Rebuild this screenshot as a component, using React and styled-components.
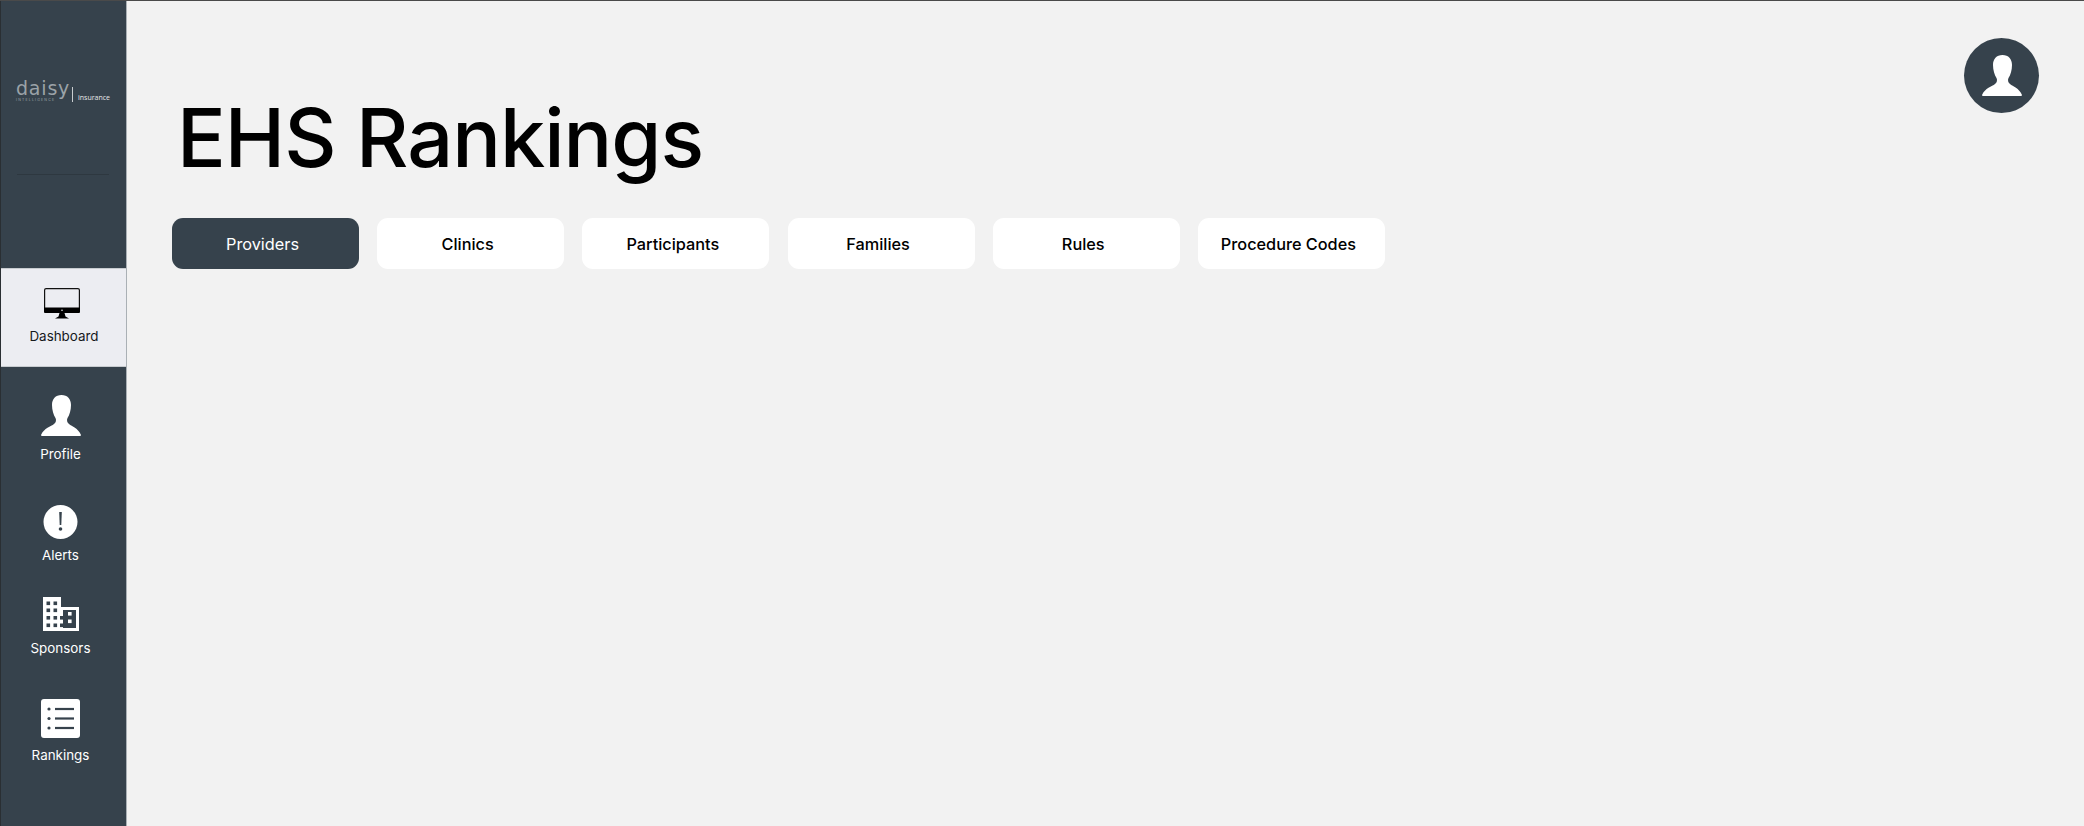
import React from 'react';
import styled, { createGlobalStyle } from 'styled-components';

const GlobalStyle = createGlobalStyle`
  * {
    box-sizing: border-box;
  }
  html, body {
    margin: 0;
    padding: 0;
    height: 100%;
    overflow: hidden;
    background: #f2f2f2;
    font-family: Inter, "Liberation Sans", sans-serif;
  }
`;

const Page = styled.div`
  display: flex;
  width: 2084px;
  height: 826px;
  border-top: 1px solid #4a4a4a;
`;

const Sidebar = styled.aside`
  display: flex;
  flex-direction: column;
  flex: 0 0 127px;
  background-color: #36424c;
  border-left: 1px solid #2a2f33;
  border-right: 1px solid #aab0b5;
`;

const Brand = styled.div`
  height: 267px;
  padding: 79px 0 0 15px;
`;

const Logo = styled.div`
  display: flex;
  align-items: flex-end;
  height: 22px;
`;

const LogoMark = styled.div`
  display: flex;
  flex-direction: column;
  width: 53px;
  color: #9ba3a8;
`;

const LogoName = styled.span`
  font-family: "DejaVu Sans", sans-serif;
  font-size: 19px;
  line-height: 19px;
  letter-spacing: 0.8px;
`;

const LogoTag = styled.span`
  font-size: 3.5px;
  line-height: 4px;
  letter-spacing: 1.2px;
  white-space: nowrap;
`;

const LogoBar = styled.div`
  width: 1px;
  height: 15px;
  margin: 0 5px 0 3px;
  background-color: #c9cdd0;
`;

const LogoProduct = styled.span`
  font-family: "Open Sans", sans-serif;
  font-size: 7px;
  font-weight: 500;
  line-height: 9px;
  color: #e6e8ea;
`;

const BrandRule = styled.hr`
  width: 92px;
  height: 1px;
  margin: 72px 0 0 1px;
  border: 0;
  background-color: #2e3840;
`;

const NavItem = styled.div`
  display: flex;
  flex-direction: column;
  align-items: center;
  height: ${(p) => (p.$active ? '99px' : 'auto')};
  padding: ${(p) => (p.$active ? '19px 0 0 1px' : '0 6px 0 0')};
  margin-top: ${(p) => p.$top || 0}px;
  background-color: ${(p) => (p.$active ? '#ecedf2' : 'transparent')};
  color: ${(p) => (p.$active ? '#15191c' : '#ffffff')};
  border-top: ${(p) => (p.$active ? '1px solid #c8ccd0' : '0')};
  border-bottom: ${(p) => (p.$active ? '1px solid #c8ccd0' : '0')};
`;

const NavIcon = styled.svg`
  display: block;
  flex: none;
  margin-right: ${(p) => p.$shift || 0}px;
`;

const NavLabel = styled.span`
  margin-top: ${(p) => p.$gap || 8}px;
  font-size: 13.4px;
  line-height: 18px;
  white-space: nowrap;
`;

const Main = styled.main`
  flex: 1;
  padding: 37px 45px 0 45px;
`;

const Header = styled.header`
  display: flex;
  justify-content: space-between;
  align-items: flex-start;
`;

const Title = styled.h1`
  margin: 51px 0 0 5px;
  font-size: 81px;
  font-weight: 500;
  line-height: 98px;
  letter-spacing: -1px;
  color: #000000;
`;

const Avatar = styled.div`
  display: flex;
  align-items: center;
  justify-content: center;
  width: 75px;
  height: 75px;
  border-radius: 50%;
  background-color: #36424c;
`;

const Tabs = styled.nav`
  display: flex;
  gap: 18.2px;
  margin-top: 31px;
`;

const Tab = styled.button`
  width: 187px;
  height: 51px;
  padding: 0 6px 0 0;
  border: 0;
  border-radius: 11px;
  background-color: ${(p) => (p.$active ? '#36424c' : '#ffffff')};
  color: ${(p) => (p.$active ? '#ffffff' : '#000000')};
  font-family: inherit;
  font-size: 16.3px;
  font-weight: ${(p) => (p.$active ? 400 : 450)};
  white-space: nowrap;
`;

const PERSON = 'M20.5 0C26.5 0 30 4 30 10C30 15 28.5 20 26.5 23C25.5 25 26 27.5 28 29C31 31.5 37 33 40 40Q40 41 39 41L1 41Q0 41 0 40C3 33 10 31.5 13 29C15 27.5 15.5 25 14.5 23C12.5 20 11 15 11 10C11 4 14.5 0 20.5 0Z';

function PersonIcon() {
  return (
    <NavIcon width="40" height="41" viewBox="0 0 40 41" fill="#fff">
      <path d={PERSON} />
    </NavIcon>
  );
}

function MonitorIcon() {
  return (
    <NavIcon $shift={5} width="36" height="31" viewBox="0 0 36 31">
      <rect x="0.6" y="0.6" width="34.8" height="23" rx="1.5" fill="#ecedf2" stroke="#111" strokeWidth="1.2" />
      <path d="M0 19.5H36V24Q36 25 35 25H1Q0 25 0 24Z" fill="#000" />
      <circle cx="18" cy="22.2" r="0.8" fill="#ecedf2" />
      <path d="M15.5 25H20.5L21.5 28.5L25 30.5H11L14.5 28.5Z" fill="#000" />
    </NavIcon>
  );
}

function AlertIcon() {
  return (
    <NavIcon width="35" height="34" viewBox="0 0 35 34">
      <circle cx="17.5" cy="17" r="17" fill="#fff" />
      <path d="M16.2 7H18.8L18.3 20H16.7Z" fill="#36424c" />
      <circle cx="17.5" cy="24" r="1.8" fill="#36424c" />
    </NavIcon>
  );
}

function BuildingIcon() {
  const dark = [
    [3.5, 4.5], [10.5, 4.5],
    [3.5, 11.5], [10.5, 11.5],
    [3.5, 19], [10.5, 19], [17, 19],
    [3.5, 26.5], [10.5, 26.5], [17, 26.5],
  ];
  return (
    <NavIcon width="36" height="34" viewBox="0 0 36 34">
      <path d="M0 0H18V10H36V34H0Z" fill="#fff" />
      <rect x="20" y="13" width="13" height="18" fill="#36424c" />
      {dark.map(([x, y]) => (
        <rect key={`${x}-${y}`} x={x} y={y} width="3.6" height="3.6" fill="#36424c" />
      ))}
      <rect x="25" y="15" width="3.6" height="3.6" fill="#fff" />
      <rect x="25" y="22.5" width="3.6" height="3.6" fill="#fff" />
    </NavIcon>
  );
}

function ListIcon() {
  return (
    <NavIcon width="39" height="39" viewBox="0 0 39 39">
      <rect width="39" height="39" rx="3" fill="#fff" />
      {[10, 19.5, 29].map((y) => (
        <g key={y} fill="#36424c">
          <circle cx="8" cy={y} r="1.6" />
          <rect x="14" y={y - 1.1} width="19" height="2.2" />
        </g>
      ))}
    </NavIcon>
  );
}

const TABS = ['Providers', 'Clinics', 'Participants', 'Families', 'Rules', 'Procedure Codes'];

export default function App() {
  return (
    <>
      <GlobalStyle />
      <Page>
        <Sidebar>
          <Brand>
            <Logo>
              <LogoMark>
                <LogoName>daisy</LogoName>
                <LogoTag>INTELLIGENCE</LogoTag>
              </LogoMark>
              <LogoBar />
              <LogoProduct>insurance</LogoProduct>
            </Logo>
            <BrandRule />
          </Brand>
          <NavItem $active>
            <MonitorIcon />
            <NavLabel>Dashboard</NavLabel>
          </NavItem>
          <NavItem $top={28}>
            <PersonIcon />
            <NavLabel $gap={9}>Profile</NavLabel>
          </NavItem>
          <NavItem $top={42}>
            <AlertIcon />
            <NavLabel $gap={7}>Alerts</NavLabel>
          </NavItem>
          <NavItem $top={33}>
            <BuildingIcon />
            <NavLabel>Sponsors</NavLabel>
          </NavItem>
          <NavItem $top={42}>
            <ListIcon />
            <NavLabel>Rankings</NavLabel>
          </NavItem>
        </Sidebar>
        <Main>
          <Header>
            <Title>EHS Rankings</Title>
            <Avatar>
              <PersonIcon />
            </Avatar>
          </Header>
          <Tabs>
            {TABS.map((label, i) => (
              <Tab key={label} $active={i === 0}>{label}</Tab>
            ))}
          </Tabs>
        </Main>
      </Page>
    </>
  );
}
